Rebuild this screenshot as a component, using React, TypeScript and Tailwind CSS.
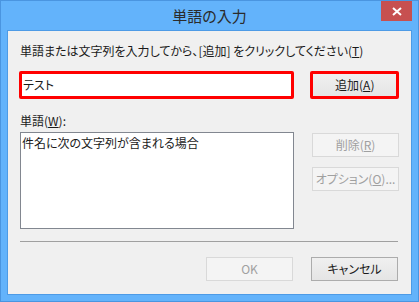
import React from 'react';

const font = "font-['Meiryo_UI','Noto_Sans_CJK_JP',sans-serif] [font-feature-settings:'palt']";

const Btn: React.FC<{ children: React.ReactNode; disabled?: boolean; className?: string }> = ({ children, disabled, className = '' }) => (
  <div
    className={`flex h-[24px] w-[87px] items-center justify-center border text-[12px] ${
      disabled
        ? 'border-[#d9d9d9] bg-[#f4f4f4] text-[#a0a0a0]'
        : 'border-[#acacac] bg-gradient-to-b from-[#f0f0f0] to-[#e5e5e5] text-[#1a1a1a]'
    } ${className}`}
  >
    {children}
  </div>
);

export default function App() {
  return (
    <div className={`flex h-[302px] w-[419px] flex-col border border-[#4a95e0] bg-[#63b3fb] ${font}`}>
      {/* title bar */}
      <div className="relative flex h-[29px] shrink-0 items-center justify-center">
        <span className="text-[15px] leading-none text-[#2b2b2b]">単語の入力</span>
        <div className="absolute right-[6px] top-0 flex h-[20px] w-[31px] items-center justify-center bg-[#c75050]">
          <svg width="10" height="9" viewBox="0 0 10 9">
            <path d="M1 1 L9 8 M9 1 L1 8" stroke="#fff" strokeWidth="2" />
          </svg>
        </div>
      </div>

      {/* client area */}
      <div className="mx-[6px] flex h-[265px] flex-col border border-[#4d9be6] bg-[#f0f0f0] px-[12px] text-[12px] text-[#1a1a1a]">
        <div className="mt-[12px] leading-[16px]">
          単語または文字列を入力してから、[追加] をクリックしてください(<span className="underline">T</span>)
        </div>

        <div className="mt-[12px] flex items-center">
          <div className="-ml-px flex h-[28px] w-[277px] items-center rounded-[2px] border-[3px] border-[#ff0000] bg-white pl-[1px]">
            テスト
          </div>
          <div className="ml-[16px] flex h-[28px] w-[89px] items-center justify-center rounded-[2px] border-[3px] border-[#ff0000] bg-gradient-to-b from-[#f0f0f0] to-[#e5e5e5]">
            追加(<span className="underline">A</span>)
          </div>
        </div>

        <div className="mt-[14px] leading-[16px]">
          単語(<span className="underline">W</span>):
        </div>

        <div className="mt-[3px] flex">
          <div className="h-[97px] w-[274px] border border-[#828790] bg-white px-[1px] pt-[2px] leading-[16px]">
            件名に次の文字列が含まれる場合
          </div>
          <div className="ml-[18px] flex flex-col gap-[10px] pt-px">
            <Btn disabled>
              削除(<span className="underline">R</span>)
            </Btn>
            <Btn disabled>
              オプション(<span className="underline">O</span>)...
            </Btn>
          </div>
        </div>

        <div className="mt-[12px] h-px w-[378px] bg-[#a0a0a0]" />

        <div className="mt-[15px] flex justify-end gap-[18px] pr-px">
          <Btn disabled>OK</Btn>
          <Btn>キャンセル</Btn>
        </div>
      </div>
    </div>
  );
}
